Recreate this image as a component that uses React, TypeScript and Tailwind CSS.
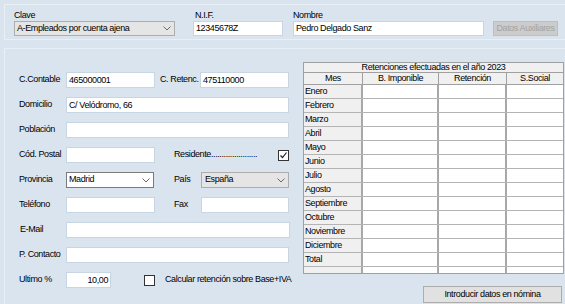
import React from 'react';

const months = [
  'Enero', 'Febrero', 'Marzo', 'Abril', 'Mayo', 'Junio', 'Julio',
  'Agosto', 'Septiembre', 'Octubre', 'Noviembre', 'Diciembre', 'Total',
];

const Chevron = () => (
  <svg width="8" height="5" viewBox="0 0 8 5" className="shrink-0">
    <path d="M0.5 0.5 L4 4 L7.5 0.5" fill="none" stroke="#6b6b6b" strokeWidth="1" />
  </svg>
);

const Check = ({ checked }: { checked?: boolean }) => (
  <div className="w-[11px] h-[11px] shrink-0 bg-white border border-[#333333] flex items-center justify-center">
    {checked && (
      <svg width="9" height="9" viewBox="0 0 9 9">
        <path d="M1.5 4.5 L3.5 6.5 L7.5 1.5" fill="none" stroke="#222222" strokeWidth="1.2" />
      </svg>
    )}
  </div>
);

const Box: React.FC<{ className: string; children?: React.ReactNode }> = ({ className, children }) => (
  <div className={`h-[16px] shrink-0 bg-white border border-[#c8d5e3] px-[2px] leading-[14px] whitespace-nowrap ${className}`}>
    {children}
  </div>
);

const Label: React.FC<{ className: string; children: React.ReactNode }> = ({ className, children }) => (
  <div className={`shrink-0 whitespace-nowrap ${className}`}>{children}</div>
);

export default function App() {
  return (
    <div className="w-[565px] h-[304px] overflow-hidden bg-[#dae4ef] font-['Liberation_Sans',Arial,sans-serif] text-[9px] tracking-[-0.4px] text-black pl-[4px] pt-[4px]">
      {/* cabecera */}
      <div className="h-[36px] border border-r-0 border-[#e9eff6] flex pl-[9px] pt-[5px]">
        <div className="w-[161px] flex flex-col">
          <div className="h-[11px] leading-[11px]">Clave</div>
          <div className="h-[15px] bg-[#e5e5e5] border border-[#adadad] flex items-center justify-between pl-[2px] pr-[3px]">
            <span>A-Empleados por cuenta ajena</span>
            <Chevron />
          </div>
        </div>
        <div className="w-[90px] ml-[18px] flex flex-col">
          <div className="h-[11px] leading-[11px] pl-[2px]">N.I.F.</div>
          <div className="h-[15px] bg-white border border-[#c8d5e3] px-[2px] leading-[13px]">12345678Z</div>
        </div>
        <div className="w-[191px] ml-[10px] flex flex-col">
          <div className="h-[11px] leading-[11px]">Nombre</div>
          <div className="h-[15px] bg-white border border-[#c8d5e3] px-[2px] leading-[13px]">Pedro Delgado Sanz</div>
        </div>
        <div className="w-[65px] ml-[9px] flex flex-col">
          <div className="h-[11px]" />
          <div className="h-[15px] bg-[#cccccc] border border-[#bfbfbf] text-[#a3a3a3] text-center leading-[13px]">Datos Auxiliares</div>
        </div>
      </div>

      {/* cuerpo */}
      <div className="mt-[8px] h-[260px] border-l border-t border-[#e9eff6] flex pl-[14px] pt-[13px]">
        <div className="w-[271px] pt-[10px] flex flex-col gap-[9px]">
          <div className="h-[16px] flex items-center">
            <Label className="w-[47px]">C.Contable</Label>
            <Box className="w-[89px]">465000001</Box>
            <Label className="ml-[5px] w-[40px]">C. Retenc.</Label>
            <Box className="w-[89px]">475110000</Box>
          </div>
          <div className="h-[16px] flex items-center">
            <Label className="w-[47px]">Domicilio</Label>
            <Box className="w-[223px]">C/ Velódromo, 66</Box>
          </div>
          <div className="h-[16px] flex items-center">
            <Label className="w-[47px]">Población</Label>
            <Box className="w-[223px]" />
          </div>
          <div className="h-[16px] flex items-center">
            <Label className="w-[47px]">Cód. Postal</Label>
            <Box className="w-[89px]" />
            <Label className="ml-[19px] w-[104px]">Residente......................</Label>
            <Check checked />
          </div>
          <div className="h-[16px] flex items-center">
            <Label className="w-[47px]">Provincia</Label>
            <div className="w-[88px] h-[16px] bg-white border border-[#7a7a7a] flex items-center justify-between pl-[2px] pr-[3px]">
              <span>Madrid</span>
              <Chevron />
            </div>
            <Label className="ml-[20px] w-[27px]">País</Label>
            <div className="w-[88px] h-[16px] bg-[#e5e5e5] border border-[#adadad] flex items-center justify-between pl-[3px] pr-[3px]">
              <span>España</span>
              <Chevron />
            </div>
          </div>
          <div className="h-[16px] flex items-center">
            <Label className="w-[47px]">Teléfono</Label>
            <Box className="w-[89px]" />
            <Label className="ml-[19px] w-[27px]">Fax</Label>
            <Box className="w-[88px]" />
          </div>
          <div className="h-[16px] flex items-center">
            <Label className="w-[47px] pl-[1px]">E-Mail</Label>
            <Box className="w-[224px]" />
          </div>
          <div className="h-[16px] flex items-center">
            <Label className="w-[47px]">P. Contacto</Label>
            <Box className="w-[223px]" />
          </div>
          <div className="h-[16px] flex items-center">
            <Label className="w-[47px]">Ultimo %</Label>
            <Box className="w-[45px] text-right">10,00</Box>
            <div className="ml-[33px]">
              <Check />
            </div>
            <Label className="ml-[10px]">Calcular retención sobre Base+IVA</Label>
          </div>
        </div>

        <div className="ml-[13px] w-[261px] flex flex-col">
          <div className="h-[212px] border border-[#a0a0a0] bg-white flex flex-col">
            <div className="h-[10px] shrink-0 border-b border-[#a0a0a0] bg-[#f0f0f0] text-center leading-[9px]">
              Retenciones efectuadas en el año 2023
            </div>
            <div className="h-[12px] shrink-0 flex border-b border-[#a0a0a0] bg-[#f0f0f0] leading-[11px] text-center">
              <div className="w-[59px] border-r border-[#a0a0a0]">Mes</div>
              <div className="w-[76px] border-r border-[#a0a0a0]">B. Imponible</div>
              <div className="w-[68px] border-r border-[#a0a0a0]">Retención</div>
              <div className="flex-1">S.Social</div>
            </div>
            {months.map((m) => (
              <div key={m} className="h-[14px] shrink-0 flex border-b border-[#b4b4b4] leading-[13px]">
                <div className="w-[59px] border-r-2 border-[#a8a8a8] bg-[#f0f0f0] pl-[1px]">{m}</div>
                <div className="w-[76px] border-r-2 border-[#a8a8a8]" />
                <div className="w-[68px] border-r-2 border-[#a8a8a8]" />
                <div className="flex-1" />
              </div>
            ))}
            <div className="flex-1 flex">
              <div className="w-[59px] border-r-2 border-[#a8a8a8] bg-[#f0f0f0]" />
              <div className="w-[76px] border-r-2 border-[#a8a8a8]" />
              <div className="w-[68px] border-r-2 border-[#a8a8a8]" />
              <div className="flex-1" />
            </div>
          </div>
          <div className="mt-[12px] ml-[120px] w-[139px] h-[17px] bg-[#e1e1e1] border border-[#adadad] text-center leading-[15px]">
            Introducir datos en nómina
          </div>
        </div>
      </div>
    </div>
  );
}
